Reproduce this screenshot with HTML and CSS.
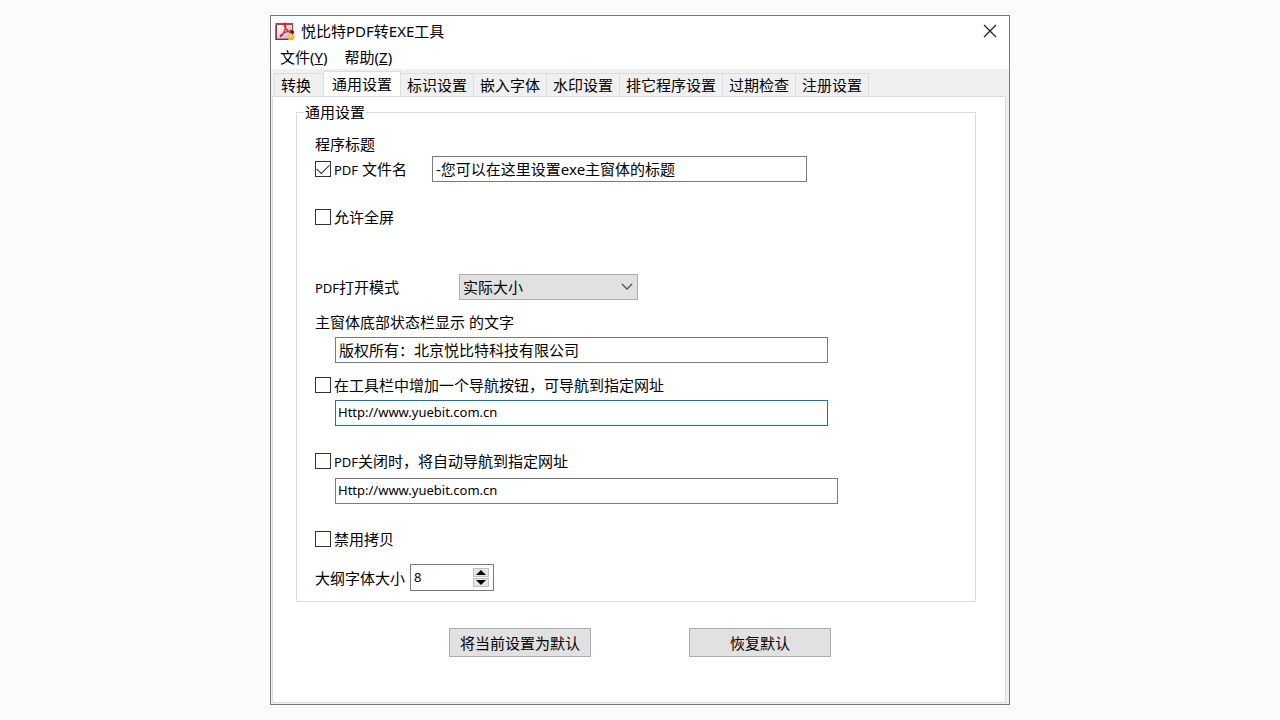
FILE: index.html
```html
<!DOCTYPE html>
<html lang="zh-CN">
  <head>
    <meta charset="UTF-8" />
    <meta name="viewport" content="width=device-width, initial-scale=1.0" />
    <title>悦比特PDF转EXE工具</title>
    <link rel="stylesheet" href="styles.css">
  </head>
  <body>
    <div class="window">
      <header class="titlebar">
        <svg class="app-icon" viewBox="0 0 20 20" aria-hidden="true">
          <defs>
            <linearGradient id="face" x1="0" y1="0" x2="1" y2="1">
              <stop offset="0" stop-color="#ffffff" />
              <stop offset="1" stop-color="#b9b4c0" />
            </linearGradient>
          </defs>
          <rect x="0.5" y="2" width="17.5" height="17" fill="#c23a42" />
          <rect x="2" y="4" width="15" height="13.5" fill="url(#face)" />
          <path d="M0.5 19V4h1.200v14h16v1z" fill="#7d2a4c" />
          <path d="M10 2c-2 1-0.500 4 2 7s5 3.500 6 2.500-3-2-7-0.500-6.500 4-5.500 4.500 3.500-3.500 4.500-7 1-6.500 0-6.500z" fill="none" stroke="#dc1f28" stroke-width="1.200" />
          <path d="M15.500 8.500l3.500 1.500v3l-3.500-1z" fill="#7c1720" />
          <path d="M13 15l3-2.500 3.500 2v3L16 19.500l-3-1z" fill="#f0b92c" />
          <path d="M14 15.500l2-1.500 1.500 1-2 1.500z" fill="#fff0a0" />
        </svg>
        <h1>悦比特PDF转EXE工具</h1>
        <button type="button" class="close" aria-label="关闭">
          <svg viewBox="0 0 14 14" aria-hidden="true">
            <path d="M1 1l12 12M13 1L1 13" fill="none" stroke="#222" stroke-width="1.300" />
          </svg>
        </button>
      </header>
      <nav class="menu">
        <a href="#file">文件(<u>Y</u>)</a>
        <a href="#help">帮助(<u>Z</u>)</a>
      </nav>
      <div class="tabs" role="tablist">
        <button type="button" role="tab">转换</button>
        <button type="button" role="tab" class="active" aria-selected="true">通用设置</button>
        <button type="button" role="tab">标识设置</button>
        <button type="button" role="tab">嵌入字体</button>
        <button type="button" role="tab">水印设置</button>
        <button type="button" role="tab">排它程序设置</button>
        <button type="button" role="tab">过期检查</button>
        <button type="button" role="tab">注册设置</button>
      </div>
      <main class="panel">
        <form id="settings-form">
          <fieldset>
            <legend>通用设置</legend>
            <div class="row">
              <label for="caption">程序标题</label>
            </div>
            <div class="row title-row">
              <label class="check"><input type="checkbox" checked /><span><span class="latin">PDF</span> 文件名</span></label>
              <input type="text" id="caption" value="-您可以在这里设置exe主窗体的标题" />
            </div>
            <div class="row group">
              <label class="check"><input type="checkbox" />允许全屏</label>
            </div>
            <div class="row mode-row">
              <label for="mode"><span class="latin">PDF</span>打开模式</label>
              <div class="select">
                <select id="mode">
                  <option>实际大小</option>
                  <option>适合页面</option>
                  <option>适合宽度</option>
                </select>
                <svg viewBox="0 0 12 8" aria-hidden="true">
                  <path d="M1 1l5 5 5-5" fill="none" stroke="#555" stroke-width="1.300" />
                </svg>
              </div>
            </div>
            <div class="row line">
              <label for="status">主窗体底部状态栏显示 的文字</label>
            </div>
            <div class="field">
              <input type="text" id="status" value="版权所有：北京悦比特科技有限公司" />
            </div>
            <div class="row line">
              <label class="check"><input type="checkbox" />在工具栏中增加一个导航按钮，可导航到指定网址</label>
            </div>
            <div class="field">
              <input type="text" class="url current" aria-label="导航按钮网址" value="Http://www.yuebit.com.cn" />
            </div>
            <div class="row group">
              <label class="check"><input type="checkbox" /><span><span class="latin">PDF</span>关闭时，将自动导航到指定网址</span></label>
            </div>
            <div class="field wide">
              <input type="text" class="url" aria-label="关闭时导航网址" value="Http://www.yuebit.com.cn" />
            </div>
            <div class="row group">
              <label class="check"><input type="checkbox" />禁用拷贝</label>
            </div>
            <div class="row size-row">
              <label for="size">大纲字体大小</label>
              <div class="spinner">
                <input type="number" id="size" value="8" />
                <div class="arrows">
                  <button type="button" aria-label="增大"><svg viewBox="0 0 10 5" aria-hidden="true"><path d="M0 5L5 0l5 5z" /></svg></button>
                  <button type="button" aria-label="减小"><svg viewBox="0 0 10 5" aria-hidden="true"><path d="M0 0h10L5 5z" /></svg></button>
                </div>
              </div>
            </div>
          </fieldset>
          <div class="actions">
            <button type="submit">将当前设置为默认</button>
            <button type="reset">恢复默认</button>
          </div>
        </form>
      </main>
    </div>
  </body>
</html>
```
FILE: styles.css
```css
* {
  box-sizing: border-box;
}
body {
  margin: 0;
  min-height: 100vh;
  padding: 15px;
  display: flex;
  justify-content: center;
  background-color: #fafbfd;
  color: #000;
}
body,
input,
select,
button {
  font-family: "Noto Sans", "Noto Sans CJK SC", sans-serif;
  font-size: 15px;
  line-height: 20px;
}
.window {
  width: 100%;
  max-width: 740px;
  display: flex;
  flex-direction: column;
  background-color: #f0f0f0;
  border: 1px solid #777;
}
.titlebar {
  display: flex;
  align-items: center;
  height: 29px;
  padding: 0 12px 0 4px;
  background-color: white;
}
.app-icon {
  width: 20px;
  height: 20px;
}
h1 {
  flex: 1;
  margin: 0 0 0 6px;
  font-size: 15px;
  font-weight: normal;
}
.close {
  display: flex;
  padding: 0;
  border: none;
  background: none;
}
.close svg {
  width: 14px;
  height: 14px;
}
.menu {
  display: flex;
  gap: 17px;
  padding: 2px 9px;
  background-color: white;
}
.menu a {
  color: black;
  text-decoration: none;
}
.tabs {
  display: flex;
  align-items: flex-end;
  height: 27px;
  padding-left: 3px;
}
.tabs button {
  height: 23px;
  padding: 0 6px;
  border: 1px solid #dcdcdc;
  border-width: 1px 1px 0 0;
  background-color: #f0f0f0;
}
.tabs button:first-child {
  padding-right: 12px;
  border-left-width: 1px;
}
.tabs .active {
  height: 26px;
  margin-bottom: -1px;
  padding: 0 8px 2px;
  background-color: white;
}
.panel {
  flex: 1;
  margin: 0 3px 1px 1px;
  padding: 5px 29px 20px 23px;
  border: 1px solid #dcdcdc;
  background-color: white;
}
fieldset {
  margin: 0;
  padding: 10px 18px;
  border: 1px solid #dcdcdc;
}
legend {
  margin-left: -11px;
  padding: 0 1px;
}
.row {
  display: flex;
  align-items: center;
  min-height: 24px;
}
.latin {
  font-size: 13px;
}
.group {
  margin-top: 23px;
}
.line {
  margin-top: 10px;
}
.check {
  display: flex;
  align-items: center;
  gap: 3px;
}
input[type="checkbox"] {
  appearance: none;
  display: flex;
  justify-content: center;
  width: 16px;
  height: 16px;
  margin: 0;
  border: 1px solid #333;
  background-color: white;
}
input[type="checkbox"]:checked::before {
  content: "";
  width: 11px;
  height: 6px;
  margin-top: 2px;
  border: solid #333;
  border-width: 0 0 1px 1px;
  transform: rotate(-45deg);
}
input[type="text"] {
  width: 100%;
  height: 26px;
  padding: 0 3px 2px;
  border: 1px solid #7a7a7a;
  outline: none;
}
input.url {
  padding-left: 2px;
  font-size: 13px;
}
input.current {
  border-color: #0078d7;
}
.title-row .check {
  flex: none;
  width: 117px;
}
.title-row input[type="text"] {
  max-width: 375px;
}
.mode-row {
  margin-top: 45px;
}
.mode-row > label {
  width: 144px;
}
.select {
  position: relative;
  width: 179px;
}
.select select {
  appearance: none;
  width: 100%;
  height: 26px;
  padding: 0 3px;
  border: 1px solid #adadad;
  border-radius: 0;
  background-color: #e1e1e1;
  color: black;
}
.select svg {
  position: absolute;
  top: 9px;
  right: 5px;
  width: 12px;
  height: 8px;
  pointer-events: none;
}
.field {
  max-width: 513px;
  margin-top: 3px;
  padding-left: 20px;
}
.field.wide {
  max-width: 523px;
  margin-top: 5px;
}
.size-row {
  gap: 5px;
  margin-top: 13px;
}
.spinner {
  display: flex;
  align-items: center;
  width: 84px;
  height: 27px;
  padding-right: 4px;
  border: 1px solid #7a7a7a;
  background-color: white;
}
.spinner input {
  appearance: textfield;
  flex: 1;
  min-width: 0;
  padding: 0 3px 2px;
  border: none;
  outline: none;
  font-size: 13px;
}
.spinner input::-webkit-inner-spin-button {
  appearance: none;
}
.arrows {
  display: flex;
  flex-direction: column;
  gap: 1px;
}
.arrows button {
  display: flex;
  align-items: center;
  justify-content: center;
  width: 16px;
  height: 9px;
  padding: 0;
  border: 1px solid #c0c0c0;
  background-color: #e6e6e6;
}
.arrows svg {
  width: 10px;
  height: 5px;
}
.actions {
  display: flex;
  justify-content: center;
  gap: 98px;
  margin-top: 26px;
  padding-left: 8px;
}
.actions button {
  width: 142px;
  height: 29px;
  padding: 0;
  border: 1px solid #adadad;
  background-color: #e1e1e1;
}
.actions button:hover {
  border-color: #0078d7;
}
```
